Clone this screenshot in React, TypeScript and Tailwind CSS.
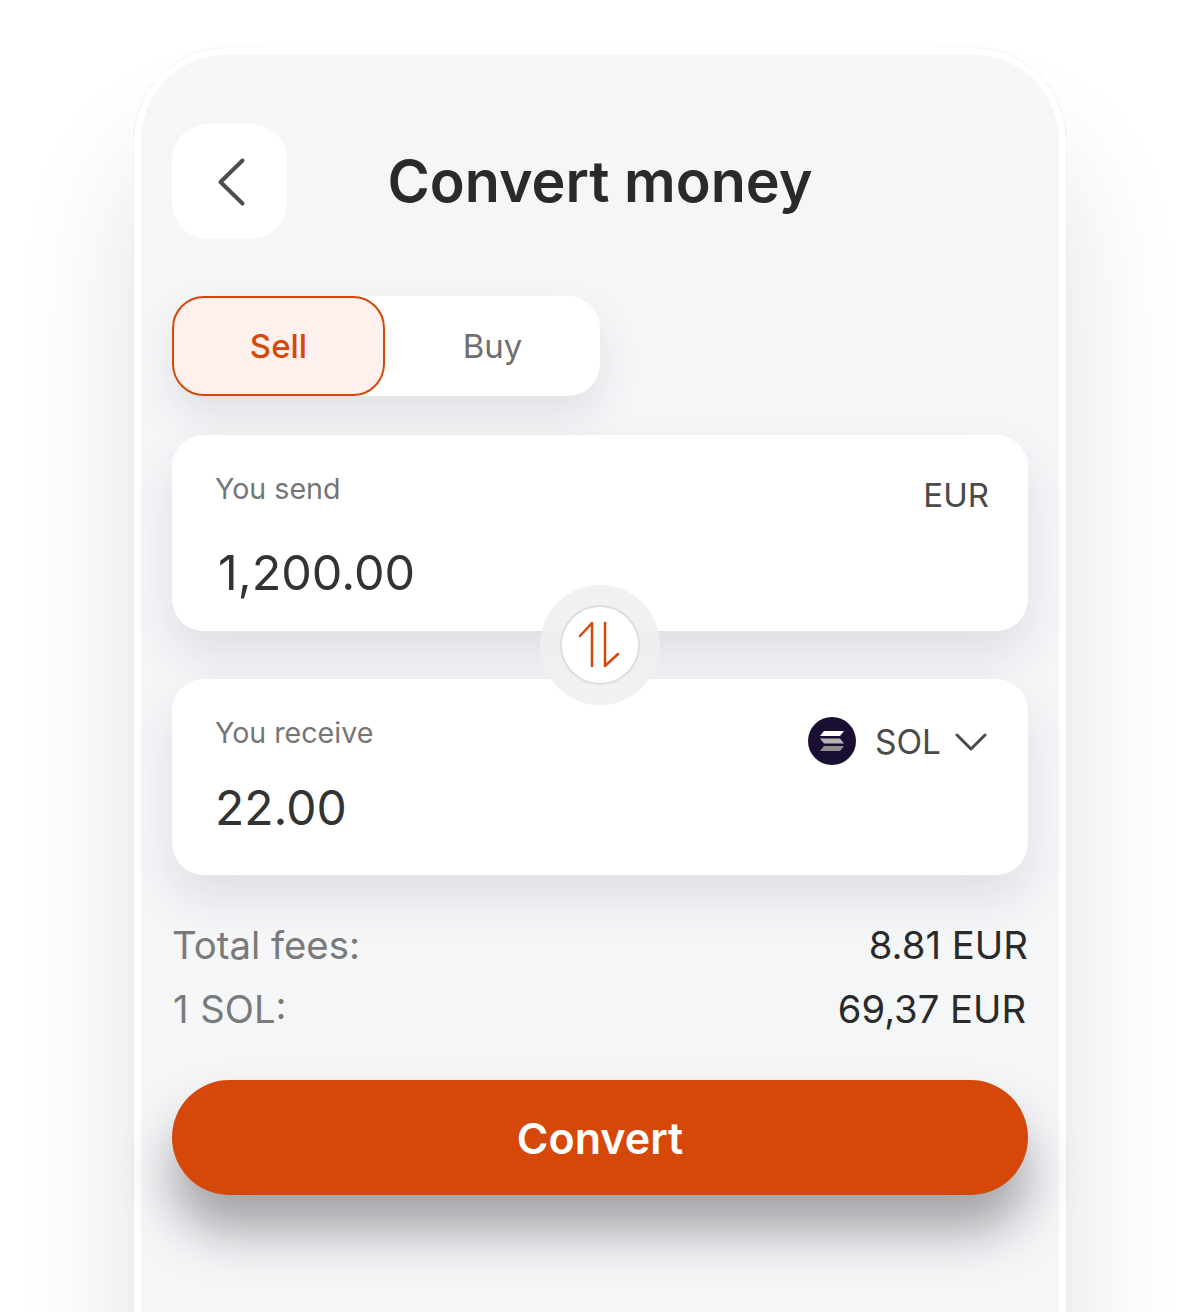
// App.tsx — Convert money phone screen
import React from 'react';

const font = { fontFamily: 'Inter, "Liberation Sans", sans-serif' };

function ChevronLeftIcon() {
  return (
    <svg width="32" height="50" viewBox="0 0 32 50" fill="none">
      <path d="M28.5 3.5 L6.5 25 L28.5 46.5" stroke="#4d4d4d" strokeWidth="4" strokeLinecap="round" strokeLinejoin="round" />
    </svg>
  );
}

function SwapIcon() {
  return (
    <svg width="42" height="48" viewBox="0 0 42 48" fill="none">
      <path d="M2 15 L14 2 V45" stroke="#d6470a" strokeWidth="2.5" strokeLinecap="round" strokeLinejoin="round" />
      <path d="M27 2 V45 L40 33" stroke="#d6470a" strokeWidth="2.5" strokeLinecap="round" strokeLinejoin="round" />
    </svg>
  );
}

function SolanaIcon() {
  return (
    <div className="w-12 h-12 rounded-full bg-[#1a0f33] flex items-center justify-center">
      <svg width="26" height="22" viewBox="0 0 26 22">
        <path d="M5 1 H25 L21 6 H1 Z" fill="#ffffff" />
        <path d="M1 8.5 H21 L25 13.5 H5 Z" fill="#b5b5b5" />
        <path d="M5 16 H25 L21 21 H1 Z" fill="#8e8e8e" />
      </svg>
    </div>
  );
}

function ChevronDownIcon() {
  return (
    <svg width="32" height="20" viewBox="0 0 32 20" fill="none">
      <path d="M2 3 L16 17 L30 3" stroke="#4a4a4a" strokeWidth="3" strokeLinecap="round" strokeLinejoin="round" />
    </svg>
  );
}

export default function App() {
  return (
    <div style={font} className="w-[1200px] h-[1312px] bg-white overflow-hidden pt-12 px-[134px]">
      <div className="h-[1400px] rounded-t-[92px] border-[7px] border-white bg-[#f5f6f8] px-[31px] pt-[69px] shadow-[0_0_1px_rgba(0,0,0,0.18),0_100px_120px_rgba(40,45,60,0.14)]">
        {/* Header */}
        <div className="relative h-[115px] flex items-center justify-center">
          <button className="absolute left-0 top-0 w-[115px] h-[115px] rounded-[36px] bg-white flex items-center justify-center">
            <ChevronLeftIcon />
          </button>
          <h1 className="text-[57.4px] leading-none font-semibold text-[#2a2a2a]">Convert money</h1>
        </div>

        {/* Sell / Buy */}
        <div className="mt-[57px] w-[428px] h-[100px] rounded-[32px] bg-white flex shadow-[0_20px_40px_rgba(40,45,60,0.10)]">
          <div className="w-[213px] h-full rounded-[32px] border-2 border-[#d6470a] bg-[#fef0ec] flex items-center justify-center pt-[2px] text-[33px] font-medium text-[#d6470a]">
            Sell
          </div>
          <div className="flex-1 flex items-center justify-center pt-[2px] text-[33px] text-[#6f6f6f]">Buy</div>
        </div>

        {/* Amount cards */}
        <div className="relative mt-[39px] flex flex-col gap-12">
          <div className="h-[196px] rounded-[32px] bg-white pl-[43px] pr-[39px] pt-[36px] shadow-[0_24px_48px_rgba(40,45,60,0.11)]">
            <div className="flex justify-between">
              <span className="text-[28.6px] leading-9 text-[#767676]">You send</span>
              <span className="text-[33px] leading-10 mt-[4px] text-[#4a4a4a]">EUR</span>
            </div>
            <div className="mt-[29px] ml-[3px] text-[48.5px] leading-[58px] text-[#333333]">1,200.00</div>
          </div>

          <div className="h-[196px] rounded-[32px] bg-white pl-[43px] pr-[41px] pt-[36px] shadow-[0_24px_48px_rgba(40,45,60,0.11)]">
            <div className="flex justify-between items-start">
              <span className="text-[28.6px] leading-9 text-[#767676]">You receive</span>
              <div className="flex items-center mt-[2px]">
                <SolanaIcon />
                <span className="ml-[19px] pt-[2px] text-[33.5px] leading-10 text-[#4a4a4a]">SOL</span>
                <span className="ml-[14px] pt-[2px]"><ChevronDownIcon /></span>
              </div>
            </div>
            <div className="mt-[14px] text-[48px] leading-[58px] text-[#333333]">22.00</div>
          </div>

          {/* Swap button sits over the gap between the cards */}
          <div className="absolute left-1/2 top-[150px] -translate-x-1/2 w-[120px] h-[120px] rounded-full bg-[#f0f0f1]/90 flex items-center justify-center">
            <div className="w-20 h-20 rounded-full bg-white border-2 border-[#dcdde0] flex items-center justify-center pr-[2px]">
              <SwapIcon />
            </div>
          </div>
        </div>

        {/* Fees */}
        <div className="mt-[47px] flex justify-between items-center h-[48px] text-[38.3px]">
          <span className="text-[#7a7a7a]">Total fees:</span>
          <span className="text-[#2a2a2a]">8.81 EUR</span>
        </div>
        <div className="mt-[16px] flex justify-between items-center h-[48px] text-[38.2px] pl-[1px] pr-[2px]">
          <span className="text-[#7a7a7a]"><span className="mr-[1px]">1</span> SOL:</span>
          <span className="text-[#2a2a2a]">69,37 EUR</span>
        </div>

        {/* Submit */}
        <button className="mt-[46px] w-full h-[115px] rounded-full bg-[#d6470a] pt-[2px] text-white text-[43px] font-semibold shadow-[0_36px_50px_rgba(30,30,35,0.38)]">
          Convert
        </button>
      </div>
    </div>
  );
}
